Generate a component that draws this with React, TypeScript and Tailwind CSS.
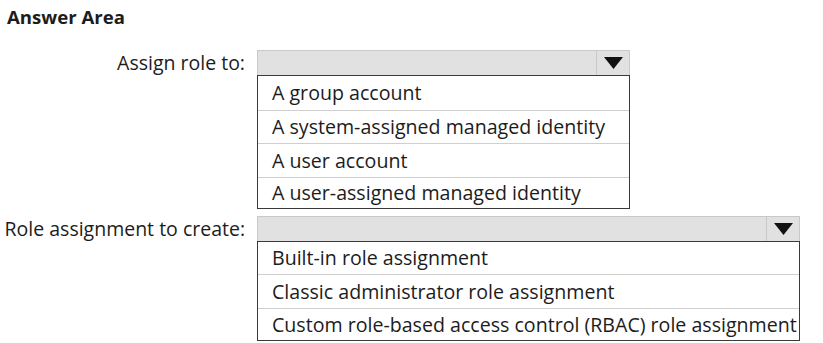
import React from "react";

const font = { fontFamily: '"Open Sans", "Noto Sans", sans-serif' };

function Dropdown({ width, options, rowH }: { width: number; options: string[]; rowH: number[] }) {
  return (
    <div className="flex flex-col" style={{ width }}>
      <div className="h-[25px] flex bg-[#e1e1e1] border border-b-0 border-[#c9c9c9]">
        <div className="flex-1" />
        <div className="w-[33px] border-l border-[#c9c9c9] flex items-center justify-center">
          <svg width="19" height="12" viewBox="0 0 19 12">
            <polygon points="0,0 19,0 9.5,12" fill="#111" />
          </svg>
        </div>
      </div>
      <div className="border border-[#3a3a3a] bg-white">
        {options.map((o, i) => (
          <div
            key={o}
            className={`flex items-center pl-[14px] text-[19.6px] text-[#1c1c1c] ${i < options.length - 1 ? "border-b border-[#cfcfcf]" : ""}`}
            style={{ height: rowH[i] }}
          >
            {o}
          </div>
        ))}
      </div>
    </div>
  );
}

export default function App() {
  return (
    <div className="w-[823px] h-[343px] bg-white text-[#1c1c1c]" style={font}>
      <div className="pl-[7px] pt-[3px] h-[50px] text-[18.6px] font-bold">Answer Area</div>
      <div className="flex">
        <div className="w-[257px] pr-[12px] text-right text-[19.5px] leading-[25px]">Assign role to:</div>
        <Dropdown width={373} options={["A group account", "A system-assigned managed identity", "A user account", "A user-assigned managed identity"]} rowH={[35, 33, 34, 30]} />
      </div>
      <div className="flex mt-[7px]">
        <div className="w-[257px] pr-[12px] text-right text-[19.5px] leading-[25px]">Role assignment to create:</div>
        <Dropdown width={543} options={["Built-in role assignment", "Classic administrator role assignment", "Custom role-based access control (RBAC) role assignment"]} rowH={[33, 34, 31]} />
      </div>
    </div>
  );
}
